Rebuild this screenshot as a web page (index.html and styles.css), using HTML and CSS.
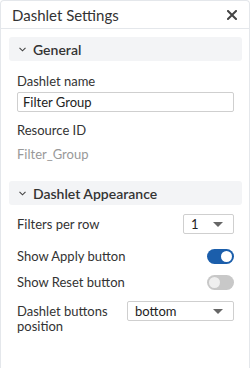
FILE: index.html
```html
<!DOCTYPE html>
<html>
<head>
<meta charset="utf-8">
<link rel="stylesheet" href="styles.css">
</head>
<body>
<div class="panel">
  <div class="header">
    <span class="title">Dashlet Settings</span>
    <svg class="close" width="10" height="10" viewBox="0 0 10 10"><path d="M1 1 L9 9 M9 1 L1 9" stroke="#444" stroke-width="2" stroke-linecap="square"/></svg>
  </div>
  <div class="body">
    <div class="section-bar">
      <svg class="chev" width="7" height="5" viewBox="0 0 7 5"><path d="M0.5 0.8 L3.5 3.8 L6.5 0.8" fill="none" stroke="#444" stroke-width="1.1"/></svg>
      <span>General</span>
    </div>
    <div class="fields">
      <div class="label first">Dashlet name</div>
      <div class="input">Filter Group</div>
      <div class="label second">Resource ID</div>
      <div class="muted">Filter_Group</div>
    </div>
    <div class="section-bar sec2">
      <svg class="chev" width="7" height="5" viewBox="0 0 7 5"><path d="M0.5 0.8 L3.5 3.8 L6.5 0.8" fill="none" stroke="#444" stroke-width="1.1"/></svg>
      <span>Dashlet Appearance</span>
    </div>
    <div class="fields">
      <div class="row r1">
        <span>Filters per row</span>
        <div class="select small"><span>1</span><i class="caret"></i></div>
      </div>
      <div class="row r2">
        <span>Show Apply button</span>
        <div class="toggle on"><i></i></div>
      </div>
      <div class="row r3">
        <span>Show Reset button</span>
        <div class="toggle off"><i></i></div>
      </div>
      <div class="row r4">
        <span class="wrap">Dashlet buttons position</span>
        <div class="select wide"><span>bottom</span><i class="caret"></i></div>
      </div>
    </div>
  </div>
</div>
</body>
</html>
```
FILE: styles.css
```css
html, body { margin: 0; padding: 0; background: #fff; }
body { font-family: Lato, "Open Sans", sans-serif; color: #333; }
.panel {
  box-sizing: border-box;
  width: 250px;
  height: 368px;
  border: 1px solid #e4e7eb;
  border-bottom: none;
  border-radius: 4px 4px 0 0;
}
.header {
  height: 27px;
  border-bottom: 1px solid #e4e7eb;
  display: flex;
  align-items: center;
  justify-content: space-between;
  padding: 0 12px 0 11px;
}
.title { font-size: 15px; color: #333; }
.close { margin-top: 1px; }
.body { padding: 8px 7px 0 8px; }
.section-bar {
  height: 24px;
  background: #f3f4f6;
  border-radius: 3px;
  display: flex;
  align-items: center;
  padding-left: 10px;
  font-size: 14px;
  font-weight: 600;
  color: #333;
}
.section-bar .chev { margin-right: 7px; margin-top: 1px; }
.sec2 { margin-top: 18px; }
.fields { padding: 0 8px; font-size: 13px; }
.label { line-height: 18px; }
.label.first { margin-top: 11px; }
.label.second { margin-top: 9px; }
.input {
  margin-top: 2px;
  height: 20px;
  box-sizing: border-box;
  border: 1px solid #cfcfcf;
  border-radius: 2px;
  padding-left: 5px;
  line-height: 18px;
  color: #222;
}
.muted { color: #999; margin-top: 6px; line-height: 18px; }
.row {
  display: flex;
  justify-content: space-between;
  align-items: center;
  height: 20px;
}
.r1 { margin-top: 9px; }
.r2 { margin-top: 12px; }
.r3 { margin-top: 6px; }
.r4 { margin-top: 9px; align-items: flex-start; height: auto; }
.wrap { width: 100px; line-height: 15px; padding-top: 3px; }
.select {
  box-sizing: border-box;
  height: 20px;
  border: 1px solid #cfcfcf;
  border-radius: 2px;
  display: flex;
  align-items: center;
  justify-content: space-between;
  padding: 0 10px 0 7px;
  color: #222;
}
.select.small { width: 51px; }
.select.wide { width: 107px; }
.caret {
  width: 0; height: 0;
  border-left: 5px solid transparent;
  border-right: 5px solid transparent;
  border-top: 5px solid #666;
}
.toggle {
  width: 27px;
  height: 15px;
  border-radius: 8px;
  position: relative;
}
.toggle i {
  position: absolute;
  top: 2px;
  width: 11px;
  height: 11px;
  border-radius: 50%;
}
.toggle.on { background: #1b5eab; }
.toggle.on i { right: 2px; background: #fff; }
.toggle.off { background: #c8c8c8; }
.toggle.off i { left: 2px; background: #efefef; }
```
